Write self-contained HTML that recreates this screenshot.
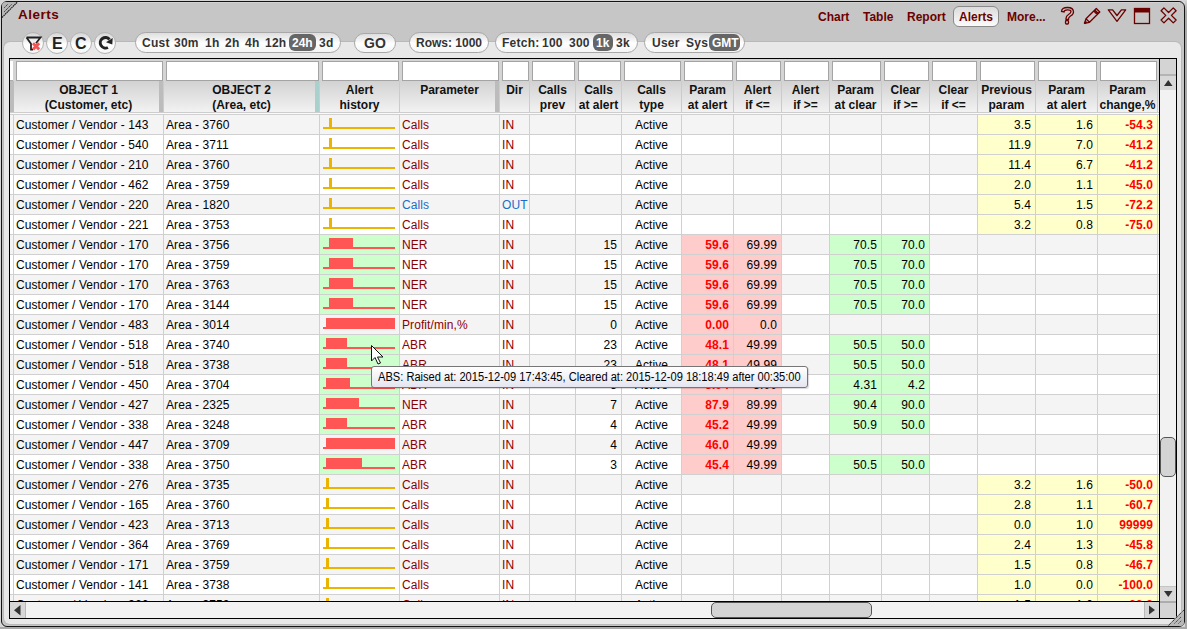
<!DOCTYPE html><html><head><meta charset="utf-8"><style>

*{box-sizing:border-box;margin:0;padding:0}
html,body{width:1187px;height:629px;overflow:hidden;background:#d6d6d6;font-family:"Liberation Sans", sans-serif;}
.ab{position:absolute}
.t{position:absolute;white-space:nowrap;font-size:12px;line-height:14px}
.b{font-weight:bold}
.c{position:absolute;overflow:hidden;white-space:nowrap;font-size:12px;line-height:14px;padding-top:3px;color:#000;letter-spacing:0.08px}
.r{text-align:right} .m{text-align:center}
.pill{position:absolute;border:1px solid #a8a8a8;border-radius:11px;background:linear-gradient(#dedede 0%,#ffffff 55%,#f4f4f4 100%)}
.circ{position:absolute;width:22px;height:22px;border:1px solid #b4b4b4;border-radius:50%;background:linear-gradient(#d6d6d6 0%,#ffffff 60%,#f6f6f6 100%)}
.hl{position:absolute;background:#666;border-radius:6px}

</style></head><body>
<div class="ab" style="left:0;top:627px;width:1187px;height:2px;background:#a9a9a9"></div>
<div class="ab" style="left:1185px;top:0;width:2px;height:629px;background:linear-gradient(#d6d6d6 0px,#a9a9a9 12px)"></div>
<div class="ab" style="left:1px;top:1px;width:1184px;height:626px;border:1px solid #141414;border-radius:6px;background:#c6c6c6"></div>
<div class="ab" style="left:6px;top:2px;width:1174px;height:1px;background:#d2d2d2"></div>
<div class="ab" style="left:3px;top:41px;width:1179px;height:584px;border-radius:7px;background:linear-gradient(#b9b9b9,#b9b9b9)"></div>
<div class="ab" style="left:4px;top:42px;width:1177px;height:582px;border-radius:6px;background:#e8e8e8"></div>
<svg class="ab" style="left:0;top:0" width="20" height="20" viewBox="0 0 20 20">
<path d="M2 17.5 L2 6 Q2 2 6 2 L17.5 2 Z" fill="#b6b6b6"/>
<path d="M2 17.5 L17.5 2" stroke="#1a1a1a" stroke-width="1.1" stroke-dasharray="1.6 0.6"/>
<path d="M4.2 11.8 L11.8 4.2" stroke="#3a3a3a" stroke-width="1" stroke-dasharray="1.6 0.6"/>
<path d="M4.2 7.8 L7.8 4.2" stroke="#3a3a3a" stroke-width="1" stroke-dasharray="1.6 0.6"/>
</svg>
<div class="t b" style="left:18px;top:7px;font-size:13.5px;line-height:16px;color:#6b0000;letter-spacing:0.5px">Alerts</div>
<div class="t b" style="left:818px;top:10px;color:#6b0000">Chart</div>
<div class="t b" style="left:863px;top:10px;color:#6b0000">Table</div>
<div class="t b" style="left:907px;top:10px;color:#6b0000">Report</div>
<div class="t b" style="left:1007px;top:10px;color:#6b0000">More...</div>
<div class="ab" style="left:953px;top:6px;width:46px;height:21px;border:1px solid #8a8a8a;border-radius:6px;background:linear-gradient(#dcdcdc,#fbfbfb)"></div>
<div class="t b" style="left:959px;top:10px;color:#6b0000">Alerts</div>
<svg class="ab" style="left:1056px;top:4px" width="126" height="24" viewBox="1056 4 126 24" fill="none" stroke="#6b0000" stroke-width="1.3">
<path d="M1061.5 11.5 Q1061.5 7.5 1067.5 7.5 Q1073.5 7.5 1073.5 12 Q1073.5 14.5 1070.5 16 Q1068.5 17.5 1068.5 19 L1068.5 19.5 L1066 19.5 L1066 18.5 Q1066 16 1068.5 14.5 Q1071 13 1071 11.5 Q1071 9.8 1067.5 9.8 Q1064 9.8 1064 12 Z"/>
<rect x="1065.5" y="20.5" width="3" height="3.5" rx="1"/>
<path d="M1084.5 23.3 L1086 18.8 L1096.3 8.5 L1099.8 12 L1089.5 22.3 Z M1086 18.8 L1089.5 22.3 M1093.8 11 L1097.3 14.5 M1094.8 10 L1098.3 13.5" stroke-linejoin="round"/>
<path d="M1084.5 23.5 L1086.5 21.5" stroke-width="2"/>
<path d="M1108.3 9.8 L1112.6 9.8 L1117 15.5 L1121.4 9.8 L1125.7 9.8 L1117 21.3 Z" stroke-linejoin="round"/>
<rect x="1134.5" y="8.5" width="15" height="15"/>
<rect x="1134" y="8" width="16" height="4.5" fill="#6b0000" stroke="none"/>
<path d="M1173.27 22.90 L1168.60 18.23 L1163.93 22.90 L1161.10 20.07 L1165.77 15.40 L1161.10 10.73 L1163.93 7.90 L1168.60 12.57 L1173.27 7.90 L1176.10 10.73 L1171.43 15.40 L1176.10 20.07 Z" stroke-linejoin="round"/>
</svg>
<div class="circ" style="left:22px;top:32px"></div>
<div class="circ" style="left:46px;top:32px"></div>
<div class="circ" style="left:70px;top:32px"></div>
<div class="circ" style="left:94px;top:32px"></div>
<svg class="ab" style="left:22px;top:32px" width="22" height="22" viewBox="0 0 22 22">
<path d="M4.5 5.5 L18.5 5.5 L14 11.2 M4.5 5.5 L9 11.8 L9 17.6 L11 17.6" fill="none" stroke="#222" stroke-width="1.8" stroke-linejoin="miter"/>
<path d="M11 11.2 L17.2 17.4 M17.2 11.2 L11 17.4" stroke="#f35555" stroke-width="2.9"/>
</svg>
<div class="t b" style="left:52px;top:35px;font-size:16px;line-height:18px;color:#222">E</div>
<div class="t b" style="left:75px;top:35px;font-size:16px;line-height:18px;color:#222">C</div>
<svg class="ab" style="left:94px;top:32px" width="22" height="22" viewBox="0 0 22 22">
<path d="M13.9 15.5 A5.25 5.25 0 1 1 15.5 7.4" fill="none" stroke="#222" stroke-width="3"/>
<path d="M12 10.3 L18.7 6.1 L18.3 12.6 Z" fill="#222"/>
</svg>
<div class="pill" style="left:135px;top:32px;width:206px;height:21px"></div>
<div class="hl" style="left:289px;top:34px;width:27px;height:17px"></div>
<div class="t b" style="left:142px;top:36px;color:#333;letter-spacing:0.25px">Cust</div>
<div class="t b" style="left:174px;top:36px;color:#333;letter-spacing:0.25px">30m</div>
<div class="t b" style="left:205px;top:36px;color:#333;letter-spacing:0.25px">1h</div>
<div class="t b" style="left:225px;top:36px;color:#333;letter-spacing:0.25px">2h</div>
<div class="t b" style="left:245px;top:36px;color:#333;letter-spacing:0.25px">4h</div>
<div class="t b" style="left:265px;top:36px;color:#333;letter-spacing:0.25px">12h</div>
<div class="t b" style="left:319px;top:36px;color:#333;letter-spacing:0.25px">3d</div>
<div class="t b" style="left:292px;top:36px;color:#fff">24h</div>
<div class="pill" style="left:354px;top:33px;width:42px;height:20px"></div>
<div class="t b" style="left:364px;top:35px;font-size:14px;line-height:16px;color:#333">GO</div>
<div class="pill" style="left:409px;top:32px;width:80px;height:21px"></div>
<div class="t b" style="left:416px;top:36px;color:#333">Rows: 1000</div>
<div class="pill" style="left:495px;top:32px;width:143px;height:21px"></div>
<div class="hl" style="left:593px;top:34px;width:20px;height:17px"></div>
<div class="t b" style="left:502px;top:36px;color:#333;letter-spacing:0.25px">Fetch:</div>
<div class="t b" style="left:542px;top:36px;color:#333;letter-spacing:0.25px">100</div>
<div class="t b" style="left:569px;top:36px;color:#333;letter-spacing:0.25px">300</div>
<div class="t b" style="left:616px;top:36px;color:#333;letter-spacing:0.25px">3k</div>
<div class="t b" style="left:596px;top:36px;color:#fff">1k</div>
<div class="pill" style="left:644px;top:32px;width:101px;height:21px"></div>
<div class="hl" style="left:709px;top:34px;width:31px;height:17px"></div>
<div class="t b" style="left:652px;top:36px;color:#333;letter-spacing:0.25px">User</div>
<div class="t b" style="left:686px;top:36px;color:#333;letter-spacing:0.25px">Sys</div>
<div class="t b" style="left:712px;top:36px;color:#fff">GMT</div>
<div class="ab" style="left:9px;top:58px;width:1168px;height:561px;border:1px solid #000;background:#d4d4d4"></div>
<div class="ab" style="left:10px;top:61px;width:3px;height:20px;background:#fff;border-bottom:1px solid #aaa"></div>
<div class="ab" style="left:16px;top:61px;width:147px;height:20px;background:#fff;border:1px solid #a4a4a4"></div>
<div class="ab" style="left:166px;top:61px;width:153px;height:20px;background:#fff;border:1px solid #a4a4a4"></div>
<div class="ab" style="left:322px;top:61px;width:77px;height:20px;background:#fff;border:1px solid #a4a4a4"></div>
<div class="ab" style="left:402px;top:61px;width:97px;height:20px;background:#fff;border:1px solid #a4a4a4"></div>
<div class="ab" style="left:502px;top:61px;width:27px;height:20px;background:#fff;border:1px solid #a4a4a4"></div>
<div class="ab" style="left:532px;top:61px;width:43px;height:20px;background:#fff;border:1px solid #a4a4a4"></div>
<div class="ab" style="left:578px;top:61px;width:43px;height:20px;background:#fff;border:1px solid #a4a4a4"></div>
<div class="ab" style="left:624px;top:61px;width:57px;height:20px;background:#fff;border:1px solid #a4a4a4"></div>
<div class="ab" style="left:684px;top:61px;width:49px;height:20px;background:#fff;border:1px solid #a4a4a4"></div>
<div class="ab" style="left:736px;top:61px;width:45px;height:20px;background:#fff;border:1px solid #a4a4a4"></div>
<div class="ab" style="left:784px;top:61px;width:45px;height:20px;background:#fff;border:1px solid #a4a4a4"></div>
<div class="ab" style="left:832px;top:61px;width:49px;height:20px;background:#fff;border:1px solid #a4a4a4"></div>
<div class="ab" style="left:884px;top:61px;width:45px;height:20px;background:#fff;border:1px solid #a4a4a4"></div>
<div class="ab" style="left:932px;top:61px;width:45px;height:20px;background:#fff;border:1px solid #a4a4a4"></div>
<div class="ab" style="left:980px;top:61px;width:55px;height:20px;background:#fff;border:1px solid #a4a4a4"></div>
<div class="ab" style="left:1038px;top:61px;width:59px;height:20px;background:#fff;border:1px solid #a4a4a4"></div>
<div class="ab" style="left:1100px;top:61px;width:57px;height:20px;background:#fff;border:1px solid #a4a4a4"></div>
<div class="ab" style="left:10px;top:81px;width:1149px;height:31px;background:linear-gradient(#d2d2d2,#f2f2f2)"></div>
<div class="ab" style="left:10px;top:112px;width:1149px;height:1px;background:#cdcdcd"></div>
<div class="ab" style="left:10px;top:113px;width:1149px;height:1px;background:#fafafa"></div>
<div class="ab" style="left:10px;top:114px;width:1149px;height:1px;background:#d0d0d0"></div>
<div class="ab" style="left:163px;top:81px;width:1px;height:31px;background:#cbcbcb"></div>
<div class="ab" style="left:319px;top:81px;width:1px;height:31px;background:#cbcbcb"></div>
<div class="ab" style="left:399px;top:81px;width:1px;height:31px;background:#cbcbcb"></div>
<div class="ab" style="left:499px;top:81px;width:1px;height:31px;background:#cbcbcb"></div>
<div class="ab" style="left:529px;top:81px;width:1px;height:31px;background:#cbcbcb"></div>
<div class="ab" style="left:575px;top:81px;width:1px;height:31px;background:#cbcbcb"></div>
<div class="ab" style="left:621px;top:81px;width:1px;height:31px;background:#cbcbcb"></div>
<div class="ab" style="left:681px;top:81px;width:1px;height:31px;background:#cbcbcb"></div>
<div class="ab" style="left:733px;top:81px;width:1px;height:31px;background:#cbcbcb"></div>
<div class="ab" style="left:781px;top:81px;width:1px;height:31px;background:#cbcbcb"></div>
<div class="ab" style="left:829px;top:81px;width:1px;height:31px;background:#cbcbcb"></div>
<div class="ab" style="left:881px;top:81px;width:1px;height:31px;background:#cbcbcb"></div>
<div class="ab" style="left:929px;top:81px;width:1px;height:31px;background:#cbcbcb"></div>
<div class="ab" style="left:977px;top:81px;width:1px;height:31px;background:#cbcbcb"></div>
<div class="ab" style="left:1035px;top:81px;width:1px;height:31px;background:#cbcbcb"></div>
<div class="ab" style="left:1097px;top:81px;width:1px;height:31px;background:#cbcbcb"></div>
<div class="ab" style="left:1157px;top:81px;width:1px;height:31px;background:#cbcbcb"></div>
<div class="ab" style="left:10px;top:81px;width:4px;height:31px;background:#bcbcbc"></div>
<div class="ab" style="left:159px;top:81px;width:4px;height:31px;background:#bcbcbc"></div>
<div class="ab" style="left:315px;top:81px;width:4px;height:31px;background:#a8d0cc"></div>
<div class="ab" style="left:495px;top:81px;width:4px;height:31px;background:#bcbcbc"></div>
<div class="t b m" style="left:14px;top:83px;width:149px;line-height:14.5px;color:#111">OBJECT 1<br>(Customer, etc)</div>
<div class="t b m" style="left:164px;top:83px;width:155px;line-height:14.5px;color:#111">OBJECT 2<br>(Area, etc)</div>
<div class="t b m" style="left:320px;top:83px;width:79px;line-height:14.5px;color:#111">Alert<br>history</div>
<div class="t b m" style="left:400px;top:83px;width:99px;line-height:14.5px;color:#111">Parameter</div>
<div class="t b m" style="left:500px;top:83px;width:29px;line-height:14.5px;color:#111">Dir</div>
<div class="t b m" style="left:530px;top:83px;width:45px;line-height:14.5px;color:#111">Calls<br>prev</div>
<div class="t b m" style="left:576px;top:83px;width:45px;line-height:14.5px;color:#111">Calls<br>at alert</div>
<div class="t b m" style="left:622px;top:83px;width:59px;line-height:14.5px;color:#111">Calls<br>type</div>
<div class="t b m" style="left:682px;top:83px;width:51px;line-height:14.5px;color:#111">Param<br>at alert</div>
<div class="t b m" style="left:734px;top:83px;width:47px;line-height:14.5px;color:#111">Alert<br>if &lt;=</div>
<div class="t b m" style="left:782px;top:83px;width:47px;line-height:14.5px;color:#111">Alert<br>if &gt;=</div>
<div class="t b m" style="left:830px;top:83px;width:51px;line-height:14.5px;color:#111">Param<br>at clear</div>
<div class="t b m" style="left:882px;top:83px;width:47px;line-height:14.5px;color:#111">Clear<br>if &gt;=</div>
<div class="t b m" style="left:930px;top:83px;width:47px;line-height:14.5px;color:#111">Clear<br>if &lt;=</div>
<div class="t b m" style="left:978px;top:83px;width:57px;line-height:14.5px;color:#111">Previous<br>param</div>
<div class="t b m" style="left:1036px;top:83px;width:61px;line-height:14.5px;color:#111">Param<br>at alert</div>
<div class="t b m" style="left:1098px;top:83px;width:59px;line-height:14.5px;color:#111">Param<br>change,%</div>
<div class="ab" style="left:10px;top:115px;width:1149px;height:486px;overflow:hidden">
<div class="ab" style="left:0;top:0px;width:1149px;height:19px;background:#f4f4f4"></div>
<div class="ab" style="left:0;top:19px;width:1149px;height:1px;background:#d0d0d0"></div>
<div class="ab" style="left:968px;top:0px;width:57px;height:19px;background:#ffffcc"></div>
<div class="ab" style="left:1026px;top:0px;width:61px;height:19px;background:#ffffcc"></div>
<div class="ab" style="left:1088px;top:0px;width:61px;height:19px;background:#ffffcc"></div>
<div class="ab" style="left:313px;top:12px;width:72px;height:2px;background:#eab400"></div>
<div class="ab" style="left:319px;top:3px;width:3px;height:10px;background:#eab400"></div>
<div class="c" style="left:6px;top:0px;">Customer / Vendor - 143</div>
<div class="c" style="left:156px;top:0px;">Area - 3760</div>
<div class="c" style="left:392px;top:0px;color:#8b0000">Calls</div>
<div class="c" style="left:492px;top:0px;color:#8b0000">IN</div>
<div class="c m" style="left:612px;top:0px;width:59px;">Active</div>
<div class="c r" style="left:968px;top:0px;width:53px;">3.5</div>
<div class="c r" style="left:1026px;top:0px;width:57px;">1.6</div>
<div class="c r" style="left:1088px;top:0px;width:55px;color:#ff0000;font-weight:bold">-54.3</div>
<div class="ab" style="left:0;top:20px;width:1149px;height:19px;background:#ffffff"></div>
<div class="ab" style="left:0;top:39px;width:1149px;height:1px;background:#d0d0d0"></div>
<div class="ab" style="left:968px;top:20px;width:57px;height:19px;background:#ffffcc"></div>
<div class="ab" style="left:1026px;top:20px;width:61px;height:19px;background:#ffffcc"></div>
<div class="ab" style="left:1088px;top:20px;width:61px;height:19px;background:#ffffcc"></div>
<div class="ab" style="left:313px;top:32px;width:72px;height:2px;background:#eab400"></div>
<div class="ab" style="left:319px;top:23px;width:3px;height:10px;background:#eab400"></div>
<div class="c" style="left:6px;top:20px;">Customer / Vendor - 540</div>
<div class="c" style="left:156px;top:20px;">Area - 3711</div>
<div class="c" style="left:392px;top:20px;color:#8b0000">Calls</div>
<div class="c" style="left:492px;top:20px;color:#8b0000">IN</div>
<div class="c m" style="left:612px;top:20px;width:59px;">Active</div>
<div class="c r" style="left:968px;top:20px;width:53px;">11.9</div>
<div class="c r" style="left:1026px;top:20px;width:57px;">7.0</div>
<div class="c r" style="left:1088px;top:20px;width:55px;color:#ff0000;font-weight:bold">-41.2</div>
<div class="ab" style="left:0;top:40px;width:1149px;height:19px;background:#f4f4f4"></div>
<div class="ab" style="left:0;top:59px;width:1149px;height:1px;background:#d0d0d0"></div>
<div class="ab" style="left:968px;top:40px;width:57px;height:19px;background:#ffffcc"></div>
<div class="ab" style="left:1026px;top:40px;width:61px;height:19px;background:#ffffcc"></div>
<div class="ab" style="left:1088px;top:40px;width:61px;height:19px;background:#ffffcc"></div>
<div class="ab" style="left:313px;top:52px;width:72px;height:2px;background:#eab400"></div>
<div class="ab" style="left:319px;top:43px;width:3px;height:10px;background:#eab400"></div>
<div class="c" style="left:6px;top:40px;">Customer / Vendor - 210</div>
<div class="c" style="left:156px;top:40px;">Area - 3760</div>
<div class="c" style="left:392px;top:40px;color:#8b0000">Calls</div>
<div class="c" style="left:492px;top:40px;color:#8b0000">IN</div>
<div class="c m" style="left:612px;top:40px;width:59px;">Active</div>
<div class="c r" style="left:968px;top:40px;width:53px;">11.4</div>
<div class="c r" style="left:1026px;top:40px;width:57px;">6.7</div>
<div class="c r" style="left:1088px;top:40px;width:55px;color:#ff0000;font-weight:bold">-41.2</div>
<div class="ab" style="left:0;top:60px;width:1149px;height:19px;background:#ffffff"></div>
<div class="ab" style="left:0;top:79px;width:1149px;height:1px;background:#d0d0d0"></div>
<div class="ab" style="left:968px;top:60px;width:57px;height:19px;background:#ffffcc"></div>
<div class="ab" style="left:1026px;top:60px;width:61px;height:19px;background:#ffffcc"></div>
<div class="ab" style="left:1088px;top:60px;width:61px;height:19px;background:#ffffcc"></div>
<div class="ab" style="left:313px;top:72px;width:72px;height:2px;background:#eab400"></div>
<div class="ab" style="left:319px;top:63px;width:3px;height:10px;background:#eab400"></div>
<div class="c" style="left:6px;top:60px;">Customer / Vendor - 462</div>
<div class="c" style="left:156px;top:60px;">Area - 3759</div>
<div class="c" style="left:392px;top:60px;color:#8b0000">Calls</div>
<div class="c" style="left:492px;top:60px;color:#8b0000">IN</div>
<div class="c m" style="left:612px;top:60px;width:59px;">Active</div>
<div class="c r" style="left:968px;top:60px;width:53px;">2.0</div>
<div class="c r" style="left:1026px;top:60px;width:57px;">1.1</div>
<div class="c r" style="left:1088px;top:60px;width:55px;color:#ff0000;font-weight:bold">-45.0</div>
<div class="ab" style="left:0;top:80px;width:1149px;height:19px;background:#f4f4f4"></div>
<div class="ab" style="left:0;top:99px;width:1149px;height:1px;background:#d0d0d0"></div>
<div class="ab" style="left:968px;top:80px;width:57px;height:19px;background:#ffffcc"></div>
<div class="ab" style="left:1026px;top:80px;width:61px;height:19px;background:#ffffcc"></div>
<div class="ab" style="left:1088px;top:80px;width:61px;height:19px;background:#ffffcc"></div>
<div class="ab" style="left:313px;top:92px;width:72px;height:2px;background:#eab400"></div>
<div class="ab" style="left:319px;top:83px;width:3px;height:10px;background:#eab400"></div>
<div class="c" style="left:6px;top:80px;">Customer / Vendor - 220</div>
<div class="c" style="left:156px;top:80px;">Area - 1820</div>
<div class="c" style="left:392px;top:80px;color:#1a6ec8">Calls</div>
<div class="c" style="left:492px;top:80px;color:#1a6ec8">OUT</div>
<div class="c m" style="left:612px;top:80px;width:59px;">Active</div>
<div class="c r" style="left:968px;top:80px;width:53px;">5.4</div>
<div class="c r" style="left:1026px;top:80px;width:57px;">1.5</div>
<div class="c r" style="left:1088px;top:80px;width:55px;color:#ff0000;font-weight:bold">-72.2</div>
<div class="ab" style="left:0;top:100px;width:1149px;height:19px;background:#ffffff"></div>
<div class="ab" style="left:0;top:119px;width:1149px;height:1px;background:#d0d0d0"></div>
<div class="ab" style="left:968px;top:100px;width:57px;height:19px;background:#ffffcc"></div>
<div class="ab" style="left:1026px;top:100px;width:61px;height:19px;background:#ffffcc"></div>
<div class="ab" style="left:1088px;top:100px;width:61px;height:19px;background:#ffffcc"></div>
<div class="ab" style="left:313px;top:112px;width:72px;height:2px;background:#eab400"></div>
<div class="ab" style="left:319px;top:103px;width:3px;height:10px;background:#eab400"></div>
<div class="c" style="left:6px;top:100px;">Customer / Vendor - 221</div>
<div class="c" style="left:156px;top:100px;">Area - 3753</div>
<div class="c" style="left:392px;top:100px;color:#8b0000">Calls</div>
<div class="c" style="left:492px;top:100px;color:#8b0000">IN</div>
<div class="c m" style="left:612px;top:100px;width:59px;">Active</div>
<div class="c r" style="left:968px;top:100px;width:53px;">3.2</div>
<div class="c r" style="left:1026px;top:100px;width:57px;">0.8</div>
<div class="c r" style="left:1088px;top:100px;width:55px;color:#ff0000;font-weight:bold">-75.0</div>
<div class="ab" style="left:0;top:120px;width:1149px;height:19px;background:#f4f4f4"></div>
<div class="ab" style="left:0;top:139px;width:1149px;height:1px;background:#d0d0d0"></div>
<div class="ab" style="left:310px;top:120px;width:79px;height:19px;background:#ccffcc"></div>
<div class="ab" style="left:672px;top:120px;width:51px;height:19px;background:#ffcccc"></div>
<div class="ab" style="left:724px;top:120px;width:47px;height:19px;background:#ffcccc"></div>
<div class="ab" style="left:820px;top:120px;width:51px;height:19px;background:#ccffcc"></div>
<div class="ab" style="left:872px;top:120px;width:47px;height:19px;background:#ccffcc"></div>
<div class="ab" style="left:313px;top:132px;width:72px;height:2px;background:#ff5555"></div>
<div class="ab" style="left:319px;top:123px;width:24px;height:10px;background:#ff5555"></div>
<div class="c" style="left:6px;top:120px;">Customer / Vendor - 170</div>
<div class="c" style="left:156px;top:120px;">Area - 3756</div>
<div class="c" style="left:392px;top:120px;color:#8b0000">NER</div>
<div class="c" style="left:492px;top:120px;color:#8b0000">IN</div>
<div class="c r" style="left:566px;top:120px;width:41px;">15</div>
<div class="c m" style="left:612px;top:120px;width:59px;">Active</div>
<div class="c r" style="left:672px;top:120px;width:47px;color:#ff0000;font-weight:bold">59.6</div>
<div class="c r" style="left:724px;top:120px;width:43px;">69.99</div>
<div class="c r" style="left:820px;top:120px;width:47px;">70.5</div>
<div class="c r" style="left:872px;top:120px;width:43px;">70.0</div>
<div class="ab" style="left:0;top:140px;width:1149px;height:19px;background:#ffffff"></div>
<div class="ab" style="left:0;top:159px;width:1149px;height:1px;background:#d0d0d0"></div>
<div class="ab" style="left:310px;top:140px;width:79px;height:19px;background:#ccffcc"></div>
<div class="ab" style="left:672px;top:140px;width:51px;height:19px;background:#ffcccc"></div>
<div class="ab" style="left:724px;top:140px;width:47px;height:19px;background:#ffcccc"></div>
<div class="ab" style="left:820px;top:140px;width:51px;height:19px;background:#ccffcc"></div>
<div class="ab" style="left:872px;top:140px;width:47px;height:19px;background:#ccffcc"></div>
<div class="ab" style="left:313px;top:152px;width:72px;height:2px;background:#ff5555"></div>
<div class="ab" style="left:319px;top:143px;width:24px;height:10px;background:#ff5555"></div>
<div class="c" style="left:6px;top:140px;">Customer / Vendor - 170</div>
<div class="c" style="left:156px;top:140px;">Area - 3759</div>
<div class="c" style="left:392px;top:140px;color:#8b0000">NER</div>
<div class="c" style="left:492px;top:140px;color:#8b0000">IN</div>
<div class="c r" style="left:566px;top:140px;width:41px;">15</div>
<div class="c m" style="left:612px;top:140px;width:59px;">Active</div>
<div class="c r" style="left:672px;top:140px;width:47px;color:#ff0000;font-weight:bold">59.6</div>
<div class="c r" style="left:724px;top:140px;width:43px;">69.99</div>
<div class="c r" style="left:820px;top:140px;width:47px;">70.5</div>
<div class="c r" style="left:872px;top:140px;width:43px;">70.0</div>
<div class="ab" style="left:0;top:160px;width:1149px;height:19px;background:#f4f4f4"></div>
<div class="ab" style="left:0;top:179px;width:1149px;height:1px;background:#d0d0d0"></div>
<div class="ab" style="left:310px;top:160px;width:79px;height:19px;background:#ccffcc"></div>
<div class="ab" style="left:672px;top:160px;width:51px;height:19px;background:#ffcccc"></div>
<div class="ab" style="left:724px;top:160px;width:47px;height:19px;background:#ffcccc"></div>
<div class="ab" style="left:820px;top:160px;width:51px;height:19px;background:#ccffcc"></div>
<div class="ab" style="left:872px;top:160px;width:47px;height:19px;background:#ccffcc"></div>
<div class="ab" style="left:313px;top:172px;width:72px;height:2px;background:#ff5555"></div>
<div class="ab" style="left:319px;top:163px;width:24px;height:10px;background:#ff5555"></div>
<div class="c" style="left:6px;top:160px;">Customer / Vendor - 170</div>
<div class="c" style="left:156px;top:160px;">Area - 3763</div>
<div class="c" style="left:392px;top:160px;color:#8b0000">NER</div>
<div class="c" style="left:492px;top:160px;color:#8b0000">IN</div>
<div class="c r" style="left:566px;top:160px;width:41px;">15</div>
<div class="c m" style="left:612px;top:160px;width:59px;">Active</div>
<div class="c r" style="left:672px;top:160px;width:47px;color:#ff0000;font-weight:bold">59.6</div>
<div class="c r" style="left:724px;top:160px;width:43px;">69.99</div>
<div class="c r" style="left:820px;top:160px;width:47px;">70.5</div>
<div class="c r" style="left:872px;top:160px;width:43px;">70.0</div>
<div class="ab" style="left:0;top:180px;width:1149px;height:19px;background:#ffffff"></div>
<div class="ab" style="left:0;top:199px;width:1149px;height:1px;background:#d0d0d0"></div>
<div class="ab" style="left:310px;top:180px;width:79px;height:19px;background:#ccffcc"></div>
<div class="ab" style="left:672px;top:180px;width:51px;height:19px;background:#ffcccc"></div>
<div class="ab" style="left:724px;top:180px;width:47px;height:19px;background:#ffcccc"></div>
<div class="ab" style="left:820px;top:180px;width:51px;height:19px;background:#ccffcc"></div>
<div class="ab" style="left:872px;top:180px;width:47px;height:19px;background:#ccffcc"></div>
<div class="ab" style="left:313px;top:192px;width:72px;height:2px;background:#ff5555"></div>
<div class="ab" style="left:319px;top:183px;width:24px;height:10px;background:#ff5555"></div>
<div class="c" style="left:6px;top:180px;">Customer / Vendor - 170</div>
<div class="c" style="left:156px;top:180px;">Area - 3144</div>
<div class="c" style="left:392px;top:180px;color:#8b0000">NER</div>
<div class="c" style="left:492px;top:180px;color:#8b0000">IN</div>
<div class="c r" style="left:566px;top:180px;width:41px;">15</div>
<div class="c m" style="left:612px;top:180px;width:59px;">Active</div>
<div class="c r" style="left:672px;top:180px;width:47px;color:#ff0000;font-weight:bold">59.6</div>
<div class="c r" style="left:724px;top:180px;width:43px;">69.99</div>
<div class="c r" style="left:820px;top:180px;width:47px;">70.5</div>
<div class="c r" style="left:872px;top:180px;width:43px;">70.0</div>
<div class="ab" style="left:0;top:200px;width:1149px;height:19px;background:#f4f4f4"></div>
<div class="ab" style="left:0;top:219px;width:1149px;height:1px;background:#d0d0d0"></div>
<div class="ab" style="left:672px;top:200px;width:51px;height:19px;background:#ffcccc"></div>
<div class="ab" style="left:724px;top:200px;width:47px;height:19px;background:#ffcccc"></div>
<div class="ab" style="left:313px;top:212px;width:72px;height:2px;background:#ff5555"></div>
<div class="ab" style="left:316px;top:203px;width:69px;height:10px;background:#ff5555"></div>
<div class="c" style="left:6px;top:200px;">Customer / Vendor - 483</div>
<div class="c" style="left:156px;top:200px;">Area - 3014</div>
<div class="c" style="left:392px;top:200px;color:#8b0000">Profit/min,%</div>
<div class="c" style="left:492px;top:200px;color:#8b0000">IN</div>
<div class="c r" style="left:566px;top:200px;width:41px;">0</div>
<div class="c m" style="left:612px;top:200px;width:59px;">Active</div>
<div class="c r" style="left:672px;top:200px;width:47px;color:#ff0000;font-weight:bold">0.00</div>
<div class="c r" style="left:724px;top:200px;width:43px;">0.0</div>
<div class="ab" style="left:0;top:220px;width:1149px;height:19px;background:#ffffff"></div>
<div class="ab" style="left:0;top:239px;width:1149px;height:1px;background:#d0d0d0"></div>
<div class="ab" style="left:310px;top:220px;width:79px;height:19px;background:#ccffcc"></div>
<div class="ab" style="left:672px;top:220px;width:51px;height:19px;background:#ffcccc"></div>
<div class="ab" style="left:724px;top:220px;width:47px;height:19px;background:#ffcccc"></div>
<div class="ab" style="left:820px;top:220px;width:51px;height:19px;background:#ccffcc"></div>
<div class="ab" style="left:872px;top:220px;width:47px;height:19px;background:#ccffcc"></div>
<div class="ab" style="left:313px;top:232px;width:72px;height:2px;background:#ff5555"></div>
<div class="ab" style="left:316px;top:223px;width:21px;height:10px;background:#ff5555"></div>
<div class="c" style="left:6px;top:220px;">Customer / Vendor - 518</div>
<div class="c" style="left:156px;top:220px;">Area - 3740</div>
<div class="c" style="left:392px;top:220px;color:#8b0000">ABR</div>
<div class="c" style="left:492px;top:220px;color:#8b0000">IN</div>
<div class="c r" style="left:566px;top:220px;width:41px;">23</div>
<div class="c m" style="left:612px;top:220px;width:59px;">Active</div>
<div class="c r" style="left:672px;top:220px;width:47px;color:#ff0000;font-weight:bold">48.1</div>
<div class="c r" style="left:724px;top:220px;width:43px;">49.99</div>
<div class="c r" style="left:820px;top:220px;width:47px;">50.5</div>
<div class="c r" style="left:872px;top:220px;width:43px;">50.0</div>
<div class="ab" style="left:0;top:240px;width:1149px;height:19px;background:#f4f4f4"></div>
<div class="ab" style="left:0;top:259px;width:1149px;height:1px;background:#d0d0d0"></div>
<div class="ab" style="left:310px;top:240px;width:79px;height:19px;background:#ccffcc"></div>
<div class="ab" style="left:672px;top:240px;width:51px;height:19px;background:#ffcccc"></div>
<div class="ab" style="left:724px;top:240px;width:47px;height:19px;background:#ffcccc"></div>
<div class="ab" style="left:820px;top:240px;width:51px;height:19px;background:#ccffcc"></div>
<div class="ab" style="left:872px;top:240px;width:47px;height:19px;background:#ccffcc"></div>
<div class="ab" style="left:313px;top:252px;width:72px;height:2px;background:#ff5555"></div>
<div class="ab" style="left:316px;top:243px;width:21px;height:10px;background:#ff5555"></div>
<div class="c" style="left:6px;top:240px;">Customer / Vendor - 518</div>
<div class="c" style="left:156px;top:240px;">Area - 3738</div>
<div class="c" style="left:392px;top:240px;color:#8b0000">ABR</div>
<div class="c" style="left:492px;top:240px;color:#8b0000">IN</div>
<div class="c r" style="left:566px;top:240px;width:41px;">23</div>
<div class="c m" style="left:612px;top:240px;width:59px;">Active</div>
<div class="c r" style="left:672px;top:240px;width:47px;color:#ff0000;font-weight:bold">48.1</div>
<div class="c r" style="left:724px;top:240px;width:43px;">49.99</div>
<div class="c r" style="left:820px;top:240px;width:47px;">50.5</div>
<div class="c r" style="left:872px;top:240px;width:43px;">50.0</div>
<div class="ab" style="left:0;top:260px;width:1149px;height:19px;background:#ffffff"></div>
<div class="ab" style="left:0;top:279px;width:1149px;height:1px;background:#d0d0d0"></div>
<div class="ab" style="left:310px;top:260px;width:79px;height:19px;background:#ccffcc"></div>
<div class="ab" style="left:672px;top:260px;width:51px;height:19px;background:#ffcccc"></div>
<div class="ab" style="left:724px;top:260px;width:47px;height:19px;background:#ffcccc"></div>
<div class="ab" style="left:820px;top:260px;width:51px;height:19px;background:#ccffcc"></div>
<div class="ab" style="left:872px;top:260px;width:47px;height:19px;background:#ccffcc"></div>
<div class="ab" style="left:313px;top:272px;width:72px;height:2px;background:#ff5555"></div>
<div class="ab" style="left:316px;top:263px;width:24px;height:10px;background:#ff5555"></div>
<div class="c" style="left:6px;top:260px;">Customer / Vendor - 450</div>
<div class="c" style="left:156px;top:260px;">Area - 3704</div>
<div class="c" style="left:392px;top:260px;color:#8b0000">ABR</div>
<div class="c" style="left:492px;top:260px;color:#8b0000">IN</div>
<div class="c r" style="left:566px;top:260px;width:41px;">5</div>
<div class="c m" style="left:612px;top:260px;width:59px;">Active</div>
<div class="c r" style="left:672px;top:260px;width:47px;color:#ff0000;font-weight:bold">3.94</div>
<div class="c r" style="left:724px;top:260px;width:43px;">5.00</div>
<div class="c r" style="left:820px;top:260px;width:47px;">4.31</div>
<div class="c r" style="left:872px;top:260px;width:43px;">4.2</div>
<div class="ab" style="left:0;top:280px;width:1149px;height:19px;background:#f4f4f4"></div>
<div class="ab" style="left:0;top:299px;width:1149px;height:1px;background:#d0d0d0"></div>
<div class="ab" style="left:310px;top:280px;width:79px;height:19px;background:#ccffcc"></div>
<div class="ab" style="left:672px;top:280px;width:51px;height:19px;background:#ffcccc"></div>
<div class="ab" style="left:724px;top:280px;width:47px;height:19px;background:#ffcccc"></div>
<div class="ab" style="left:820px;top:280px;width:51px;height:19px;background:#ccffcc"></div>
<div class="ab" style="left:872px;top:280px;width:47px;height:19px;background:#ccffcc"></div>
<div class="ab" style="left:313px;top:292px;width:72px;height:2px;background:#ff5555"></div>
<div class="ab" style="left:316px;top:283px;width:33px;height:10px;background:#ff5555"></div>
<div class="c" style="left:6px;top:280px;">Customer / Vendor - 427</div>
<div class="c" style="left:156px;top:280px;">Area - 2325</div>
<div class="c" style="left:392px;top:280px;color:#8b0000">NER</div>
<div class="c" style="left:492px;top:280px;color:#8b0000">IN</div>
<div class="c r" style="left:566px;top:280px;width:41px;">7</div>
<div class="c m" style="left:612px;top:280px;width:59px;">Active</div>
<div class="c r" style="left:672px;top:280px;width:47px;color:#ff0000;font-weight:bold">87.9</div>
<div class="c r" style="left:724px;top:280px;width:43px;">89.99</div>
<div class="c r" style="left:820px;top:280px;width:47px;">90.4</div>
<div class="c r" style="left:872px;top:280px;width:43px;">90.0</div>
<div class="ab" style="left:0;top:300px;width:1149px;height:19px;background:#ffffff"></div>
<div class="ab" style="left:0;top:319px;width:1149px;height:1px;background:#d0d0d0"></div>
<div class="ab" style="left:310px;top:300px;width:79px;height:19px;background:#ccffcc"></div>
<div class="ab" style="left:672px;top:300px;width:51px;height:19px;background:#ffcccc"></div>
<div class="ab" style="left:724px;top:300px;width:47px;height:19px;background:#ffcccc"></div>
<div class="ab" style="left:820px;top:300px;width:51px;height:19px;background:#ccffcc"></div>
<div class="ab" style="left:872px;top:300px;width:47px;height:19px;background:#ccffcc"></div>
<div class="ab" style="left:313px;top:312px;width:72px;height:2px;background:#ff5555"></div>
<div class="ab" style="left:316px;top:303px;width:21px;height:10px;background:#ff5555"></div>
<div class="c" style="left:6px;top:300px;">Customer / Vendor - 338</div>
<div class="c" style="left:156px;top:300px;">Area - 3248</div>
<div class="c" style="left:392px;top:300px;color:#8b0000">ABR</div>
<div class="c" style="left:492px;top:300px;color:#8b0000">IN</div>
<div class="c r" style="left:566px;top:300px;width:41px;">4</div>
<div class="c m" style="left:612px;top:300px;width:59px;">Active</div>
<div class="c r" style="left:672px;top:300px;width:47px;color:#ff0000;font-weight:bold">45.2</div>
<div class="c r" style="left:724px;top:300px;width:43px;">49.99</div>
<div class="c r" style="left:820px;top:300px;width:47px;">50.9</div>
<div class="c r" style="left:872px;top:300px;width:43px;">50.0</div>
<div class="ab" style="left:0;top:320px;width:1149px;height:19px;background:#f4f4f4"></div>
<div class="ab" style="left:0;top:339px;width:1149px;height:1px;background:#d0d0d0"></div>
<div class="ab" style="left:672px;top:320px;width:51px;height:19px;background:#ffcccc"></div>
<div class="ab" style="left:724px;top:320px;width:47px;height:19px;background:#ffcccc"></div>
<div class="ab" style="left:313px;top:332px;width:72px;height:2px;background:#ff5555"></div>
<div class="ab" style="left:316px;top:323px;width:69px;height:10px;background:#ff5555"></div>
<div class="c" style="left:6px;top:320px;">Customer / Vendor - 447</div>
<div class="c" style="left:156px;top:320px;">Area - 3709</div>
<div class="c" style="left:392px;top:320px;color:#8b0000">ABR</div>
<div class="c" style="left:492px;top:320px;color:#8b0000">IN</div>
<div class="c r" style="left:566px;top:320px;width:41px;">4</div>
<div class="c m" style="left:612px;top:320px;width:59px;">Active</div>
<div class="c r" style="left:672px;top:320px;width:47px;color:#ff0000;font-weight:bold">46.0</div>
<div class="c r" style="left:724px;top:320px;width:43px;">49.99</div>
<div class="ab" style="left:0;top:340px;width:1149px;height:19px;background:#ffffff"></div>
<div class="ab" style="left:0;top:359px;width:1149px;height:1px;background:#d0d0d0"></div>
<div class="ab" style="left:310px;top:340px;width:79px;height:19px;background:#ccffcc"></div>
<div class="ab" style="left:672px;top:340px;width:51px;height:19px;background:#ffcccc"></div>
<div class="ab" style="left:724px;top:340px;width:47px;height:19px;background:#ffcccc"></div>
<div class="ab" style="left:820px;top:340px;width:51px;height:19px;background:#ccffcc"></div>
<div class="ab" style="left:872px;top:340px;width:47px;height:19px;background:#ccffcc"></div>
<div class="ab" style="left:313px;top:352px;width:72px;height:2px;background:#ff5555"></div>
<div class="ab" style="left:316px;top:343px;width:36px;height:10px;background:#ff5555"></div>
<div class="c" style="left:6px;top:340px;">Customer / Vendor - 338</div>
<div class="c" style="left:156px;top:340px;">Area - 3750</div>
<div class="c" style="left:392px;top:340px;color:#8b0000">ABR</div>
<div class="c" style="left:492px;top:340px;color:#8b0000">IN</div>
<div class="c r" style="left:566px;top:340px;width:41px;">3</div>
<div class="c m" style="left:612px;top:340px;width:59px;">Active</div>
<div class="c r" style="left:672px;top:340px;width:47px;color:#ff0000;font-weight:bold">45.4</div>
<div class="c r" style="left:724px;top:340px;width:43px;">49.99</div>
<div class="c r" style="left:820px;top:340px;width:47px;">50.5</div>
<div class="c r" style="left:872px;top:340px;width:43px;">50.0</div>
<div class="ab" style="left:0;top:360px;width:1149px;height:19px;background:#f4f4f4"></div>
<div class="ab" style="left:0;top:379px;width:1149px;height:1px;background:#d0d0d0"></div>
<div class="ab" style="left:968px;top:360px;width:57px;height:19px;background:#ffffcc"></div>
<div class="ab" style="left:1026px;top:360px;width:61px;height:19px;background:#ffffcc"></div>
<div class="ab" style="left:1088px;top:360px;width:61px;height:19px;background:#ffffcc"></div>
<div class="ab" style="left:313px;top:372px;width:72px;height:2px;background:#eab400"></div>
<div class="ab" style="left:316px;top:363px;width:3px;height:10px;background:#eab400"></div>
<div class="c" style="left:6px;top:360px;">Customer / Vendor - 276</div>
<div class="c" style="left:156px;top:360px;">Area - 3735</div>
<div class="c" style="left:392px;top:360px;color:#8b0000">Calls</div>
<div class="c" style="left:492px;top:360px;color:#8b0000">IN</div>
<div class="c m" style="left:612px;top:360px;width:59px;">Active</div>
<div class="c r" style="left:968px;top:360px;width:53px;">3.2</div>
<div class="c r" style="left:1026px;top:360px;width:57px;">1.6</div>
<div class="c r" style="left:1088px;top:360px;width:55px;color:#ff0000;font-weight:bold">-50.0</div>
<div class="ab" style="left:0;top:380px;width:1149px;height:19px;background:#ffffff"></div>
<div class="ab" style="left:0;top:399px;width:1149px;height:1px;background:#d0d0d0"></div>
<div class="ab" style="left:968px;top:380px;width:57px;height:19px;background:#ffffcc"></div>
<div class="ab" style="left:1026px;top:380px;width:61px;height:19px;background:#ffffcc"></div>
<div class="ab" style="left:1088px;top:380px;width:61px;height:19px;background:#ffffcc"></div>
<div class="ab" style="left:313px;top:392px;width:72px;height:2px;background:#eab400"></div>
<div class="ab" style="left:316px;top:383px;width:3px;height:10px;background:#eab400"></div>
<div class="c" style="left:6px;top:380px;">Customer / Vendor - 165</div>
<div class="c" style="left:156px;top:380px;">Area - 3760</div>
<div class="c" style="left:392px;top:380px;color:#8b0000">Calls</div>
<div class="c" style="left:492px;top:380px;color:#8b0000">IN</div>
<div class="c m" style="left:612px;top:380px;width:59px;">Active</div>
<div class="c r" style="left:968px;top:380px;width:53px;">2.8</div>
<div class="c r" style="left:1026px;top:380px;width:57px;">1.1</div>
<div class="c r" style="left:1088px;top:380px;width:55px;color:#ff0000;font-weight:bold">-60.7</div>
<div class="ab" style="left:0;top:400px;width:1149px;height:19px;background:#f4f4f4"></div>
<div class="ab" style="left:0;top:419px;width:1149px;height:1px;background:#d0d0d0"></div>
<div class="ab" style="left:968px;top:400px;width:57px;height:19px;background:#ffffcc"></div>
<div class="ab" style="left:1026px;top:400px;width:61px;height:19px;background:#ffffcc"></div>
<div class="ab" style="left:1088px;top:400px;width:61px;height:19px;background:#ffffcc"></div>
<div class="ab" style="left:313px;top:412px;width:72px;height:2px;background:#eab400"></div>
<div class="ab" style="left:316px;top:403px;width:3px;height:10px;background:#eab400"></div>
<div class="c" style="left:6px;top:400px;">Customer / Vendor - 423</div>
<div class="c" style="left:156px;top:400px;">Area - 3713</div>
<div class="c" style="left:392px;top:400px;color:#8b0000">Calls</div>
<div class="c" style="left:492px;top:400px;color:#8b0000">IN</div>
<div class="c m" style="left:612px;top:400px;width:59px;">Active</div>
<div class="c r" style="left:968px;top:400px;width:53px;">0.0</div>
<div class="c r" style="left:1026px;top:400px;width:57px;">1.0</div>
<div class="c r" style="left:1088px;top:400px;width:55px;color:#ff0000;font-weight:bold">99999</div>
<div class="ab" style="left:0;top:420px;width:1149px;height:19px;background:#ffffff"></div>
<div class="ab" style="left:0;top:439px;width:1149px;height:1px;background:#d0d0d0"></div>
<div class="ab" style="left:968px;top:420px;width:57px;height:19px;background:#ffffcc"></div>
<div class="ab" style="left:1026px;top:420px;width:61px;height:19px;background:#ffffcc"></div>
<div class="ab" style="left:1088px;top:420px;width:61px;height:19px;background:#ffffcc"></div>
<div class="ab" style="left:313px;top:432px;width:72px;height:2px;background:#eab400"></div>
<div class="ab" style="left:316px;top:423px;width:3px;height:10px;background:#eab400"></div>
<div class="c" style="left:6px;top:420px;">Customer / Vendor - 364</div>
<div class="c" style="left:156px;top:420px;">Area - 3769</div>
<div class="c" style="left:392px;top:420px;color:#8b0000">Calls</div>
<div class="c" style="left:492px;top:420px;color:#8b0000">IN</div>
<div class="c m" style="left:612px;top:420px;width:59px;">Active</div>
<div class="c r" style="left:968px;top:420px;width:53px;">2.4</div>
<div class="c r" style="left:1026px;top:420px;width:57px;">1.3</div>
<div class="c r" style="left:1088px;top:420px;width:55px;color:#ff0000;font-weight:bold">-45.8</div>
<div class="ab" style="left:0;top:440px;width:1149px;height:19px;background:#f4f4f4"></div>
<div class="ab" style="left:0;top:459px;width:1149px;height:1px;background:#d0d0d0"></div>
<div class="ab" style="left:968px;top:440px;width:57px;height:19px;background:#ffffcc"></div>
<div class="ab" style="left:1026px;top:440px;width:61px;height:19px;background:#ffffcc"></div>
<div class="ab" style="left:1088px;top:440px;width:61px;height:19px;background:#ffffcc"></div>
<div class="ab" style="left:313px;top:452px;width:72px;height:2px;background:#eab400"></div>
<div class="ab" style="left:316px;top:443px;width:3px;height:10px;background:#eab400"></div>
<div class="c" style="left:6px;top:440px;">Customer / Vendor - 171</div>
<div class="c" style="left:156px;top:440px;">Area - 3759</div>
<div class="c" style="left:392px;top:440px;color:#8b0000">Calls</div>
<div class="c" style="left:492px;top:440px;color:#8b0000">IN</div>
<div class="c m" style="left:612px;top:440px;width:59px;">Active</div>
<div class="c r" style="left:968px;top:440px;width:53px;">1.5</div>
<div class="c r" style="left:1026px;top:440px;width:57px;">0.8</div>
<div class="c r" style="left:1088px;top:440px;width:55px;color:#ff0000;font-weight:bold">-46.7</div>
<div class="ab" style="left:0;top:460px;width:1149px;height:19px;background:#ffffff"></div>
<div class="ab" style="left:0;top:479px;width:1149px;height:1px;background:#d0d0d0"></div>
<div class="ab" style="left:968px;top:460px;width:57px;height:19px;background:#ffffcc"></div>
<div class="ab" style="left:1026px;top:460px;width:61px;height:19px;background:#ffffcc"></div>
<div class="ab" style="left:1088px;top:460px;width:61px;height:19px;background:#ffffcc"></div>
<div class="ab" style="left:313px;top:472px;width:72px;height:2px;background:#eab400"></div>
<div class="ab" style="left:316px;top:463px;width:3px;height:10px;background:#eab400"></div>
<div class="c" style="left:6px;top:460px;">Customer / Vendor - 141</div>
<div class="c" style="left:156px;top:460px;">Area - 3738</div>
<div class="c" style="left:392px;top:460px;color:#8b0000">Calls</div>
<div class="c" style="left:492px;top:460px;color:#8b0000">IN</div>
<div class="c m" style="left:612px;top:460px;width:59px;">Active</div>
<div class="c r" style="left:968px;top:460px;width:53px;">1.0</div>
<div class="c r" style="left:1026px;top:460px;width:57px;">0.0</div>
<div class="c r" style="left:1088px;top:460px;width:55px;color:#ff0000;font-weight:bold">-100.0</div>
<div class="ab" style="left:0;top:480px;width:1149px;height:19px;background:#f4f4f4"></div>
<div class="ab" style="left:0;top:499px;width:1149px;height:1px;background:#d0d0d0"></div>
<div class="ab" style="left:968px;top:480px;width:57px;height:19px;background:#ffffcc"></div>
<div class="ab" style="left:1026px;top:480px;width:61px;height:19px;background:#ffffcc"></div>
<div class="ab" style="left:1088px;top:480px;width:61px;height:19px;background:#ffffcc"></div>
<div class="ab" style="left:313px;top:492px;width:72px;height:2px;background:#eab400"></div>
<div class="ab" style="left:316px;top:483px;width:3px;height:10px;background:#eab400"></div>
<div class="c" style="left:6px;top:480px;">Customer / Vendor - 366</div>
<div class="c" style="left:156px;top:480px;">Area - 3752</div>
<div class="c" style="left:392px;top:480px;color:#8b0000">Calls</div>
<div class="c" style="left:492px;top:480px;color:#8b0000">IN</div>
<div class="c m" style="left:612px;top:480px;width:59px;">Active</div>
<div class="c r" style="left:968px;top:480px;width:53px;">1.5</div>
<div class="c r" style="left:1026px;top:480px;width:57px;">1.0</div>
<div class="c r" style="left:1088px;top:480px;width:55px;color:#ff0000;font-weight:bold">-33.3</div>
<div class="ab" style="left:3px;top:0;width:1px;height:486px;background:#d0d0d0"></div>
<div class="ab" style="left:153px;top:0;width:1px;height:486px;background:#d0d0d0"></div>
<div class="ab" style="left:309px;top:0;width:1px;height:486px;background:#d0d0d0"></div>
<div class="ab" style="left:389px;top:0;width:1px;height:486px;background:#d0d0d0"></div>
<div class="ab" style="left:489px;top:0;width:1px;height:486px;background:#d0d0d0"></div>
<div class="ab" style="left:519px;top:0;width:1px;height:486px;background:#d0d0d0"></div>
<div class="ab" style="left:565px;top:0;width:1px;height:486px;background:#d0d0d0"></div>
<div class="ab" style="left:611px;top:0;width:1px;height:486px;background:#d0d0d0"></div>
<div class="ab" style="left:671px;top:0;width:1px;height:486px;background:#d0d0d0"></div>
<div class="ab" style="left:723px;top:0;width:1px;height:486px;background:#d0d0d0"></div>
<div class="ab" style="left:771px;top:0;width:1px;height:486px;background:#d0d0d0"></div>
<div class="ab" style="left:819px;top:0;width:1px;height:486px;background:#d0d0d0"></div>
<div class="ab" style="left:871px;top:0;width:1px;height:486px;background:#d0d0d0"></div>
<div class="ab" style="left:919px;top:0;width:1px;height:486px;background:#d0d0d0"></div>
<div class="ab" style="left:967px;top:0;width:1px;height:486px;background:#d0d0d0"></div>
<div class="ab" style="left:1025px;top:0;width:1px;height:486px;background:#d0d0d0"></div>
<div class="ab" style="left:1087px;top:0;width:1px;height:486px;background:#d0d0d0"></div>
<div class="ab" style="left:1147px;top:0;width:1px;height:486px;background:#d0d0d0"></div>
</div>
<div class="ab" style="left:1159px;top:59px;width:1px;height:543px;background:#000"></div>
<div class="ab" style="left:1160px;top:59px;width:16px;height:15px;background:#d4d4d4"></div>
<div class="ab" style="left:1160px;top:74px;width:16px;height:2px;background:#b4b4b4"></div>
<div class="ab" style="left:1160px;top:76px;width:16px;height:14px;background:#d8d8d8"></div>
<div class="ab" style="left:1160px;top:90px;width:16px;height:496px;background:#f2f2f2"></div>
<div class="ab" style="left:1160px;top:586px;width:16px;height:15px;background:#d8d8d8;border-top:1px solid #c4c4c4"></div>
<svg class="ab" style="left:1160px;top:76px" width="16" height="14"><path d="M4 10 L12.5 10 L8.25 4 Z" fill="#333"/></svg>
<svg class="ab" style="left:1160px;top:586px" width="16" height="15"><path d="M4 5 L12.5 5 L8.25 11 Z" fill="#333"/></svg>
<div class="ab" style="left:1160px;top:437px;width:16px;height:40px;border:1px solid #555;border-radius:5px;background:#d4d4d4"></div>
<div class="ab" style="left:10px;top:601px;width:1150px;height:1px;background:#000"></div>
<div class="ab" style="left:1160px;top:601px;width:16px;height:2px;background:#acacac"></div>
<div class="ab" style="left:10px;top:602px;width:1149px;height:16px;background:#f2f2f2"></div>
<div class="ab" style="left:10px;top:602px;width:16px;height:16px;background:#d6d6d6;border-right:1px solid #b8b8b8"></div>
<div class="ab" style="left:1144px;top:602px;width:15px;height:16px;background:#d6d6d6;border-left:1px solid #b8b8b8"></div>
<svg class="ab" style="left:10px;top:602px" width="16" height="16"><path d="M10.5 3 L10.5 13.5 L4 8.25 Z" fill="#333"/></svg>
<svg class="ab" style="left:1144px;top:602px" width="15" height="16"><path d="M5 3.5 L5 12.5 L11 8 Z" fill="#333"/></svg>
<div class="ab" style="left:1159px;top:601px;width:1px;height:17px;background:#000"></div>
<div class="ab" style="left:1160px;top:603px;width:16px;height:15px;background:#d4d4d4"></div>
<div class="ab" style="left:711px;top:602px;width:161px;height:16px;border:1px solid #555;border-radius:5px;background:#d4d4d4"></div>
<svg class="ab" style="left:1166px;top:608px" width="20" height="20" viewBox="0 0 20 20">
<path d="M18 1 L18 14 Q18 18 14 18 L1 18 Z" fill="#b8b8b8"/>
<path d="M1.5 18.5 L18.5 1.5" stroke="#222" stroke-width="1" stroke-dasharray="1.2 0.8"/>
<path d="M8.5 15.5 L15.5 8.5" stroke="#333" stroke-width="1" stroke-dasharray="1.2 0.8"/>
<path d="M12.5 15.5 L15.5 12.5" stroke="#333" stroke-width="1" stroke-dasharray="1.2 0.8"/>
</svg>
<div class="ab" style="left:371px;top:366px;width:437px;height:22px;border:1px solid #767676;border-radius:3px;background:linear-gradient(#ffffff,#e4e5f0);box-shadow:1px 1px 1px rgba(0,0,0,0.15)"></div>
<div class="t" style="left:378px;top:370px;font-size:12px;line-height:14px;color:#000;transform:scaleX(0.925);transform-origin:0 0">ABS: Raised at: 2015-12-09 17:43:45, Cleared at: 2015-12-09 18:18:49 after 00:35:00</div>
<svg class="ab" style="left:370px;top:344px" width="14" height="22" viewBox="0 0 14 22">
<path d="M1.5 1.5 L1.5 17 L5 13.5 L8 20 L10.5 19 L7.5 13 L13 13 Z" fill="#fff" stroke="#111" stroke-width="1" stroke-linejoin="round"/>
</svg>
</body></html>
